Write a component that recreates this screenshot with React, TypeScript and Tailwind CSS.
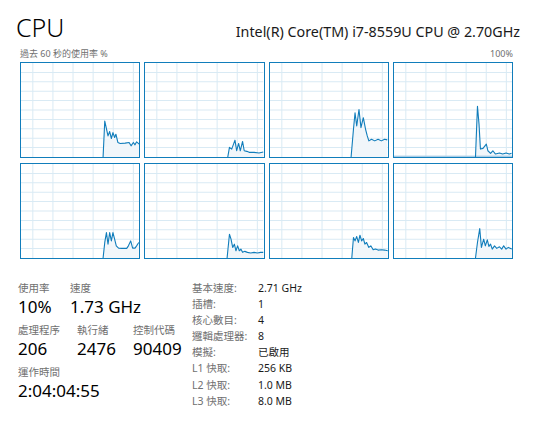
import React from "react";

type Pt = [number, number];

const graphs: { pts: Pt[]; floor?: boolean }[] = [
  { pts: [[83.3, 95], [85, 58.7], [88.3, 73.7], [90, 69.3], [91.7, 76.3], [93.3, 70.3], [95, 75.3], [96.3, 72], [98.3, 80.3], [100.7, 81.3], [105.7, 81], [109.7, 80.3], [111.7, 83.7], [114, 80.3], [115.7, 82.7], [117.3, 79.7], [120, 82]] },
  { pts: [[84, 95], [85.7, 85.3], [88, 87], [91.3, 78], [93, 88.7], [95, 81.3], [96.7, 88.7], [99, 79.3], [100.7, 88.7], [103.3, 89.3], [105.7, 90.3], [110.7, 90.3], [115.7, 91], [120, 90]] },
  { pts: [[82.3, 95], [84.7, 67], [86.3, 50.3], [88, 63.7], [90.3, 47], [92.3, 65.3], [94.7, 55.3], [97, 67], [98.7, 73.7], [100.3, 78.7], [103, 77], [106.3, 78.7], [109.7, 77], [113, 78.7], [116.3, 77], [119, 77.7]] },
  { pts: [[82.7, 95], [84.7, 43.7], [86.3, 62], [87.7, 87], [90.3, 86.3], [93.7, 82], [95.3, 88.7], [98, 91.3], [100.3, 88.7], [103, 92], [107, 91], [110.3, 92], [113.7, 91], [117, 92], [119.3, 91.3]], floor: true },
  { pts: [[83.3, 95], [85, 79.3], [86.7, 69.3], [88.3, 81], [90, 69.3], [91.7, 77.7], [93.3, 69.3], [95, 76], [96.7, 82.7], [99, 85], [102.3, 85.3], [107.3, 85.3], [109, 82.7], [111.3, 77.7], [113.3, 85], [115.7, 85], [117.3, 82.7], [119.5, 79.3]] },
  { pts: [[83.3, 95], [85.7, 71], [87.3, 76], [89, 84.3], [90.7, 81], [92.3, 87.7], [94, 82.7], [95.7, 87.7], [97.3, 86], [99, 89.3], [101.3, 88.3], [104, 89.3], [107.3, 90], [110.7, 89.3], [114, 90], [117.3, 89.3], [120, 89.3]] },
  { pts: [[83, 95], [84.7, 74.3], [86.3, 77.7], [88, 73.3], [89.7, 79.3], [91.3, 72], [93, 77.7], [94.7, 75.3], [96.3, 81], [98, 79.3], [100.3, 84.3], [102.3, 82.7], [104.7, 86.7], [107, 86], [109.7, 87], [113, 86.7], [116.3, 87], [119.5, 87.7]] },
  { pts: [[82.7, 95], [84.7, 79.3], [87, 65.3], [88.7, 84.3], [91, 76], [92.7, 82.7], [94.7, 76.7], [96.3, 83.3], [98, 81], [99.7, 86], [102, 82.7], [104.3, 85.3], [107, 83.7], [109.3, 86], [111.3, 82.7], [113.7, 86], [116, 84.3], [119.5, 86]] },
];

const vLines = [12, 32.4, 52.8, 73.2, 93.6, 114];
const hLines = [9.5, 19, 28.5, 38, 47.5, 57, 66.5, 76, 85.5];

function Graph({ pts, floor }: { pts: Pt[]; floor?: boolean }) {
  const line = pts.map((p) => p.join(",")).join(" ");
  const area = `${line} ${pts[pts.length - 1][0]},95 ${pts[0][0]},95`;
  return (
    <div className="h-[96px] border border-[#117dbb] bg-white">
      <svg viewBox="0 0 120 95" preserveAspectRatio="none" className="block h-full w-full">
        {vLines.map((x) => (
          <line key={"v" + x} x1={x} y1={0} x2={x} y2={95} stroke="#d9eaf4" strokeWidth={1} vectorEffect="non-scaling-stroke" shapeRendering="crispEdges" />
        ))}
        {hLines.map((y) => (
          <line key={"h" + y} x1={0} y1={y} x2={120} y2={y} stroke="#d9eaf4" strokeWidth={1} vectorEffect="non-scaling-stroke" shapeRendering="crispEdges" />
        ))}
        <polygon points={area} fill="#f1f6fa" />
        {floor ? <rect x={0} y={93.6} width={120} height={1.4} fill="#a9cde6" /> : null}
        <polyline points={line} fill="none" stroke="#117dbb" strokeWidth={1.1} vectorEffect="non-scaling-stroke" strokeLinejoin="round" />
      </svg>
    </div>
  );
}

const specs: [string, string][] = [
  ["基本速度:", "2.71 GHz"],
  ["插槽:", "1"],
  ["核心數目:", "4"],
  ["邏輯處理器:", "8"],
  ["模擬:", "已啟用"],
  ["L1 快取:", "256 KB"],
  ["L2 快取:", "1.0 MB"],
  ["L3 快取:", "8.0 MB"],
];

function Stat({ label, value, w }: { label: string; value: string; w: string }) {
  return (
    <div className={w}>
      <div className="text-[10.5px] leading-[14px] text-[#707070]">{label}</div>
      <div className="text-[17px] leading-[24px] text-black">{value}</div>
    </div>
  );
}

export default function App() {
  return (
    <div className="h-[423px] w-[533px] overflow-hidden bg-white font-['Noto_Sans','Noto_Sans_CJK_TC',sans-serif] text-black">
      <div className="flex h-[46px] items-baseline justify-between pl-[16px] pr-[13px] pt-[12px]">
        <span className="text-[25px] font-light leading-[30px]">CPU</span>
        <span className="text-[14.3px] leading-[30px] text-[#1a1a1a]">Intel(R) Core(TM) i7-8559U CPU @ 2.70GHz</span>
      </div>
      <div className="flex h-[16px] items-center justify-between px-[20px] text-[9px] leading-[16px] text-[#707070]">
        <span>過去 60 秒的使用率 %</span>
        <span>100%</span>
      </div>
      <div className="grid grid-cols-4 gap-x-[4px] gap-y-[5px] px-[20px]">
        {graphs.map((g, i) => (
          <Graph key={i} pts={g.pts} floor={g.floor} />
        ))}
      </div>
      <div className="flex pt-[21px]">
        <div className="mt-[1px] flex w-[192px] flex-col gap-[4px] pl-[18px]">
          <div className="flex">
            <Stat label="使用率" value="10%" w="w-[52px]" />
            <Stat label="速度" value="1.73 GHz" w="" />
          </div>
          <div className="flex">
            <Stat label="處理程序" value="206" w="w-[59px]" />
            <Stat label="執行緒" value="2476" w="w-[56px]" />
            <Stat label="控制代碼" value="90409" w="" />
          </div>
          <Stat label="運作時間" value="2:04:04:55" w="" />
        </div>
        <div className="grid grid-cols-[66px_auto] text-[10.5px] leading-[16.1px]">
          {specs.map(([k, v]) => (
            <React.Fragment key={k}>
              <span className="text-[#707070]">{k}</span>
              <span className="text-[#1a1a1a]">{v}</span>
            </React.Fragment>
          ))}
        </div>
      </div>
    </div>
  );
}
